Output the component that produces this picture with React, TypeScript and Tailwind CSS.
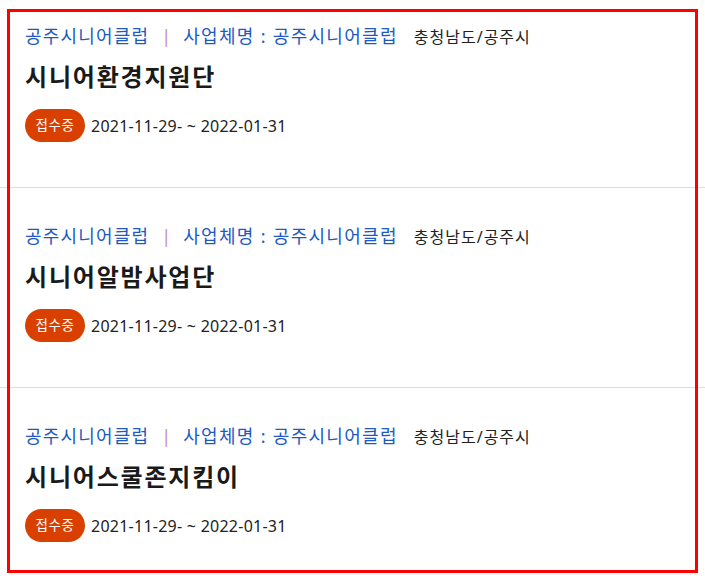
import React from "react";

const items = [
  { title: "시니어환경지원단" },
  { title: "시니어알밤사업단" },
  { title: "시니어스쿨존지킴이" },
];

const font = { fontFamily: '"Noto Sans", "Noto Sans CJK KR", sans-serif' };

export default function App() {
  return (
    <div className="relative w-[705px] h-[581px] overflow-hidden bg-white" style={font}>
      <ul>
        {items.map((it, i) => (
          <li
            key={i}
            className={`border-b border-[#dddddd] px-[25px] pb-[45px] ${i === 0 ? "pt-[23px]" : "pt-[35px]"}`}
          >
            <div className="flex items-baseline h-[26px] leading-[26px] whitespace-nowrap">
              <span className="text-[18px] tracking-[1.2px] text-[#2159c2]">공주시니어클럽</span>
              <span className="text-[18px] text-[#c48fc4] mx-[12px]">|</span>
              <span className="text-[18px] tracking-[1.3px] text-[#2159c2]">사업체명 : 공주시니어클럽</span>
              <span className="text-[16px] tracking-[1px] text-[#222222] ml-[16px]">충청남도/공주시</span>
            </div>
            <h2 className="mt-[12px] h-[32px] leading-[32px] text-[24px] tracking-[1.8px] font-bold text-[#1a1a1a] whitespace-nowrap">
              {it.title}
            </h2>
            <div className="mt-[16px] flex items-center h-[33px]">
              <span className="inline-flex items-center justify-center h-[33px] w-[60px] rounded-full bg-[#d94000] text-white text-[13.5px] tracking-[0.5px]">
                접수중
              </span>
              <span className="ml-[6px] text-[16px] tracking-[0.25px] text-[#222222] whitespace-nowrap">
                2021-11-29- ~ 2022-01-31
              </span>
            </div>
          </li>
        ))}
      </ul>
      <div className="pointer-events-none absolute left-[7px] top-[9px] w-[691px] h-[564px] border-[3px] border-[#ff0000]" />
    </div>
  );
}
